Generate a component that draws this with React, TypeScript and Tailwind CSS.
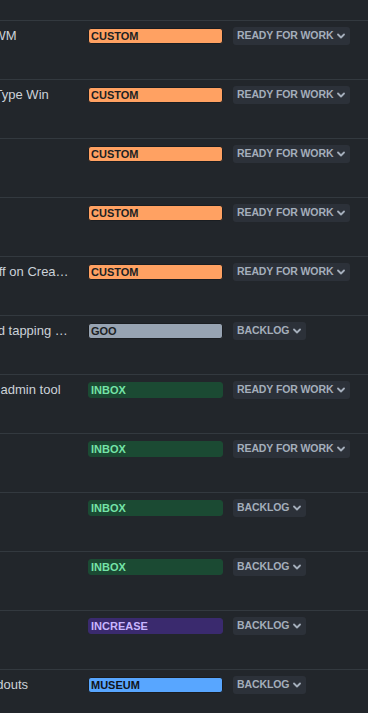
type Row = {
  title: string;
  label: string;
  status: string;
};

const labelStyles: Record<string, string> = {
  CUSTOM: "bg-[#ffa162] text-[#1c1f23] border-[#1a1d21]",
  GOO: "bg-[#97a3b2] text-[#1c1f23] border-[#1a1d21]",
  INBOX: "bg-[#1b4a33] text-[#74e3a7] border-[#1b4a33]",
  INCREASE: "bg-[#3a2a6e] text-[#c8b6ff] border-[#3a2a6e]",
  MUSEUM: "bg-[#58a6ff] text-[#111418] border-[#1a1d21]",
};

const rows: Row[] = [
  { title: "Add snapping into the WM", label: "CUSTOM", status: "READY FOR WORK" },
  { title: "Add support for all the Type Win", label: "CUSTOM", status: "READY FOR WORK" },
  { title: "Fix flaky tests", label: "CUSTOM", status: "READY FOR WORK" },
  { title: "Bump deps", label: "CUSTOM", status: "READY FOR WORK" },
  { title: "Show designer's handoff on Create screen", label: "CUSTOM", status: "READY FOR WORK" },
  { title: "Supports long press and tapping on rows", label: "GOO", status: "BACKLOG" },
  { title: "Add XLS exports in the admin tool", label: "INBOX", status: "READY FOR WORK" },
  { title: "Clean up logs", label: "INBOX", status: "READY FOR WORK" },
  { title: "Retry queue", label: "INBOX", status: "BACKLOG" },
  { title: "Audit metrics", label: "INBOX", status: "BACKLOG" },
  { title: "Rate limits", label: "INCREASE", status: "BACKLOG" },
  { title: "Print Gallery guide handouts", label: "MUSEUM", status: "BACKLOG" },
];

function Chevron() {
  return (
    <svg width="8" height="6" viewBox="0 0 8 6" fill="none" className="shrink-0">
      <path d="M1 1.5 4 4.5 7 1.5" stroke="currentColor" strokeWidth="1.8" strokeLinecap="round" strokeLinejoin="round" />
    </svg>
  );
}

function IssueRow({ row }: { row: Row }) {
  return (
    <div className="flex h-[59px] items-start border-t border-[#33393f] pt-[6px]">
      <div className="flex h-[18px] items-center">
        <div className="ml-[-136px] mr-[18px] w-[206px] shrink-0 truncate text-[13px] leading-[18px] text-[#ccd2d9]">
          {row.title}
        </div>
        <span
          className={`flex h-[16px] w-[135px] shrink-0 items-center rounded-[3px] border px-[2px] text-[11px] font-bold ${labelStyles[row.label]}`}
        >
          {row.label}
        </span>
        <button className="ml-[10px] flex h-[18px] shrink-0 items-center gap-[4px] rounded-[3px] bg-[#2c3139] pl-[4px] pr-[5px] text-[10.5px] font-bold tracking-[-0.1px] text-[#a4aebb]">
          {row.status}
          <Chevron />
        </button>
      </div>
    </div>
  );
}

export default function App() {
  return (
    <div
      className="h-[713px] w-[368px] overflow-hidden bg-[#22262b] pt-[20px]"
      style={{ fontFamily: '"Liberation Sans", Arial, sans-serif' }}
    >
      {rows.map((row, i) => (
        <IssueRow key={i} row={row} />
      ))}
    </div>
  );
}
